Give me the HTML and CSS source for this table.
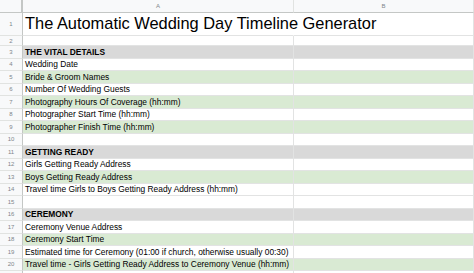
FILE: index.html
```html
<!DOCTYPE html>
<html>
<head>
<meta charset="utf-8">
<link rel="stylesheet" href="styles.css">
</head>
<body>
<div class="sheet">
  <div class="row hdr"><div class="num corner"></div><div class="col">A</div><div class="col">B</div></div>
  <div class="row r-title"><div class="num">1</div><div class="cell title">The Automatic Wedding Day Timeline Generator</div><div class="cell"></div></div>
  <div class="row r-small"><div class="num">2</div><div class="cell"></div><div class="cell"></div></div>
  <div class="row sec"><div class="num">3</div><div class="cell">THE VITAL DETAILS</div><div class="cell"></div></div>
  <div class="row"><div class="num">4</div><div class="cell">Wedding Date</div><div class="cell"></div></div>
  <div class="row grn"><div class="num">5</div><div class="cell">Bride &amp; Groom Names</div><div class="cell"></div></div>
  <div class="row"><div class="num">6</div><div class="cell">Number Of Wedding Guests</div><div class="cell"></div></div>
  <div class="row grn"><div class="num">7</div><div class="cell">Photography Hours Of Coverage (hh:mm)</div><div class="cell"></div></div>
  <div class="row"><div class="num">8</div><div class="cell">Photographer Start Time (hh:mm)</div><div class="cell"></div></div>
  <div class="row grn"><div class="num">9</div><div class="cell">Photographer Finish Time (hh:mm)</div><div class="cell"></div></div>
  <div class="row"><div class="num">10</div><div class="cell"></div><div class="cell"></div></div>
  <div class="row sec"><div class="num">11</div><div class="cell">GETTING READY</div><div class="cell"></div></div>
  <div class="row"><div class="num">12</div><div class="cell">Girls Getting Ready Address</div><div class="cell"></div></div>
  <div class="row grn"><div class="num">13</div><div class="cell">Boys Getting Ready Address</div><div class="cell"></div></div>
  <div class="row"><div class="num">14</div><div class="cell">Travel time Girls to Boys Getting Ready Address (hh:mm)</div><div class="cell"></div></div>
  <div class="row"><div class="num">15</div><div class="cell"></div><div class="cell"></div></div>
  <div class="row sec"><div class="num">16</div><div class="cell">CEREMONY</div><div class="cell"></div></div>
  <div class="row"><div class="num">17</div><div class="cell">Ceremony Venue Address</div><div class="cell"></div></div>
  <div class="row grn"><div class="num">18</div><div class="cell">Ceremony Start Time</div><div class="cell"></div></div>
  <div class="row"><div class="num">19</div><div class="cell">Estimated time for Ceremony (01:00 if church, otherwise usually 00:30)</div><div class="cell"></div></div>
  <div class="row grn"><div class="num">20</div><div class="cell">Travel time - Girls Getting Ready Address to Ceremony Venue (hh:mm)</div><div class="cell"></div></div>
  <div class="row"><div class="num"></div><div class="cell"></div><div class="cell"></div></div>
</div>
</body>
</html>
```
FILE: styles.css
```css
html, body {
  margin: 0;
  padding: 0;
  background: #ffffff;
  overflow: hidden;
}
body {
  font-family: "Liberation Sans", Arial, sans-serif;
  color: #000000;
}
.sheet {
  display: flex;
  flex-direction: column;
  width: 474px;
}
.row {
  display: grid;
  grid-template-columns: 23px 271px 1fr;
  height: 12.5px;
  box-sizing: border-box;
}
.num {
  background: #f8f9fa;
  border-right: 1px solid #c4c7c5;
  border-bottom: 1px solid #e1e3e1;
  box-sizing: border-box;
  font-size: 6px;
  color: #80868b;
  display: flex;
  align-items: center;
  justify-content: center;
}
.cell {
  border-right: 1px solid #e2e3e3;
  border-bottom: 1px solid #e2e3e3;
  box-sizing: border-box;
  font-size: 8.4px;
  padding-left: 2px;
  display: flex;
  align-items: center;
  white-space: nowrap;
  overflow: visible;
}
.hdr {
  height: 13px;
}
.hdr .num, .hdr .col {
  border-bottom: 1px solid #c4c7c5;
}
.corner {
  border-right: 2px solid #c4c7c5;
}
.col {
  background: #f8f9fa;
  border-right: 1px solid #e1e3e1;
  box-sizing: border-box;
  font-size: 6px;
  color: #80868b;
  display: flex;
  align-items: center;
  justify-content: center;
}
.r-title {
  height: 23px;
}
.r-title .cell {
  align-items: flex-end;
  padding-bottom: 2px;
}
.title {
  font-size: 16.4px;
  border-right-color: transparent;
  position: relative;
  z-index: 1;
}
.r-small {
  height: 10px;
}
.sec .cell {
  background: #d9d9d9;
  font-weight: bold;
}
.grn .cell {
  background: #d9ead3;
}
```
